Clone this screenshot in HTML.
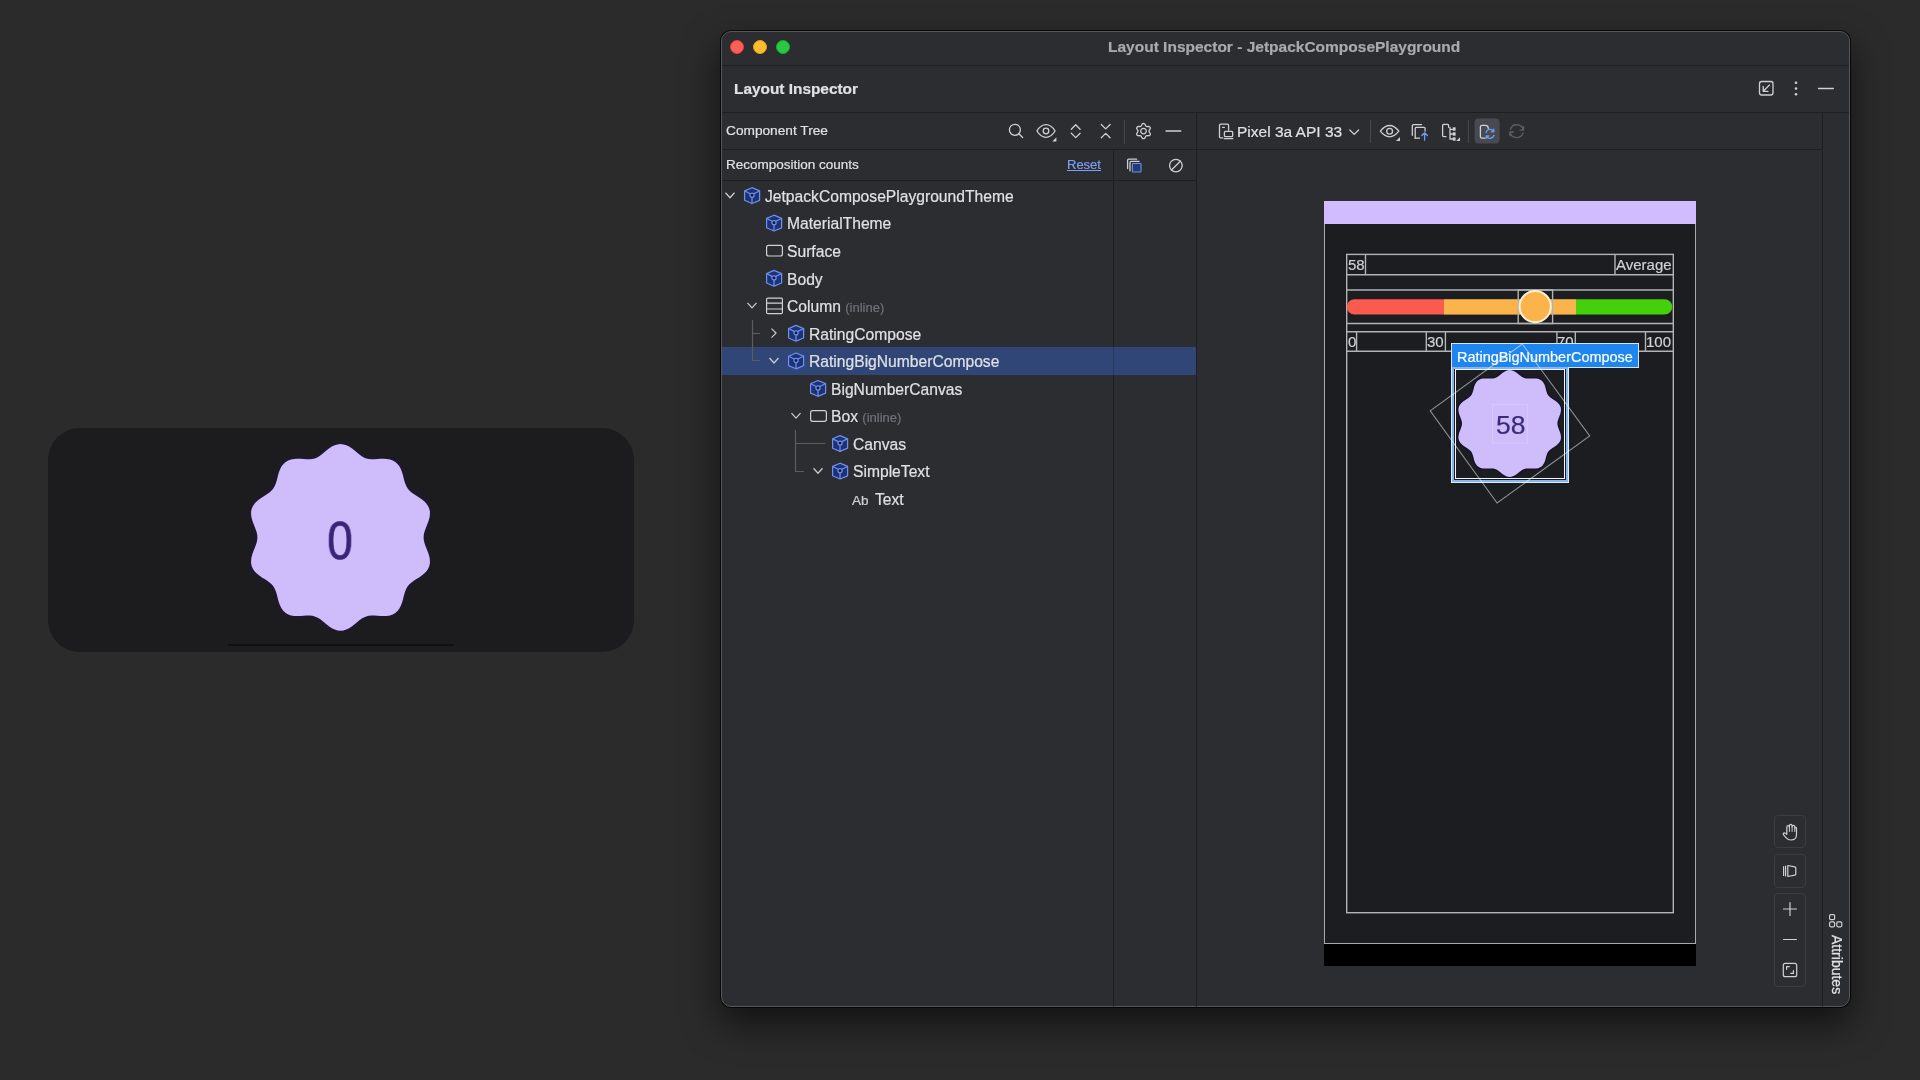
<!DOCTYPE html>
<html><head><meta charset="utf-8">
<style>
*{box-sizing:border-box}
html,body{margin:0;padding:0}
body{width:1920px;height:1080px;background:#2b2b2b;position:relative;overflow:hidden;font-family:"Liberation Sans",sans-serif;color:#dfe1e5}
.a{position:absolute}
.hl{position:absolute;height:1px;background:#1e1f22}
.vl{position:absolute;width:1px;background:#1e1f22}
.t{position:absolute;white-space:nowrap;line-height:1;will-change:transform;-webkit-text-stroke:0.2px currentColor}
svg{position:absolute;overflow:visible}
</style></head><body>

<!-- left card -->
<div class="a" style="left:48px;top:428px;width:586px;height:224px;border-radius:32px;background:#1c1c1e"></div>
<div class="a" style="left:228px;top:644px;width:226px;height:2px;background:#101011"></div>
<svg style="left:0;top:0" width="1920" height="1080"><path fill="none" stroke="#1f1830" stroke-width="4" d="M423.6 537.4L423.8 540.0L424.4 542.7L425.3 545.4L426.4 548.3L427.6 551.2L428.7 554.2L429.5 557.3L429.9 560.4L429.9 563.4L429.2 566.2L428.0 568.9L426.3 571.4L424.2 573.6L421.7 575.6L419.1 577.4L416.4 579.1L413.8 580.8L411.5 582.4L409.4 584.2L407.7 586.2L406.4 588.5L405.3 591.0L404.4 593.7L403.6 596.7L402.9 599.8L402.0 602.8L400.8 605.8L399.4 608.5L397.5 610.9L395.3 612.9L392.8 614.4L390.0 615.4L386.9 615.9L383.7 616.1L380.5 616.0L377.4 615.8L374.3 615.6L371.4 615.6L368.7 615.8L366.2 616.4L363.8 617.4L361.4 618.8L359.1 620.6L356.7 622.5L354.3 624.5L351.8 626.5L349.1 628.2L346.3 629.5L343.4 630.4L340.5 630.7L337.6 630.4L334.7 629.5L331.9 628.2L329.2 626.5L326.7 624.5L324.3 622.5L321.9 620.6L319.6 618.8L317.2 617.4L314.8 616.4L312.3 615.8L309.6 615.6L306.7 615.6L303.6 615.8L300.5 616.0L297.3 616.1L294.1 615.9L291.0 615.4L288.2 614.4L285.7 612.9L283.5 610.9L281.6 608.5L280.2 605.8L279.0 602.8L278.1 599.8L277.4 596.7L276.6 593.7L275.7 591.0L274.6 588.5L273.3 586.2L271.6 584.2L269.5 582.4L267.2 580.8L264.6 579.1L261.9 577.4L259.3 575.6L256.8 573.6L254.7 571.4L253.0 568.9L251.8 566.2L251.1 563.4L251.1 560.4L251.5 557.3L252.3 554.2L253.4 551.2L254.6 548.3L255.7 545.4L256.6 542.7L257.2 540.0L257.4 537.4L257.2 534.8L256.6 532.1L255.7 529.4L254.6 526.5L253.4 523.6L252.3 520.6L251.5 517.5L251.1 514.4L251.1 511.4L251.8 508.6L253.0 505.9L254.7 503.4L256.8 501.2L259.3 499.2L261.9 497.4L264.6 495.7L267.2 494.0L269.5 492.4L271.6 490.6L273.3 488.6L274.6 486.3L275.7 483.8L276.6 481.1L277.4 478.1L278.1 475.0L279.0 472.0L280.2 469.0L281.6 466.3L283.5 463.9L285.7 461.9L288.2 460.4L291.0 459.4L294.1 458.9L297.3 458.7L300.5 458.8L303.6 459.0L306.7 459.2L309.6 459.2L312.3 459.0L314.8 458.4L317.2 457.4L319.6 456.0L321.9 454.2L324.3 452.3L326.7 450.3L329.2 448.3L331.9 446.6L334.7 445.3L337.6 444.4L340.5 444.1L343.4 444.4L346.3 445.3L349.1 446.6L351.8 448.3L354.3 450.3L356.7 452.3L359.1 454.2L361.4 456.0L363.8 457.4L366.2 458.4L368.7 459.0L371.4 459.2L374.3 459.2L377.4 459.0L380.5 458.8L383.7 458.7L386.9 458.9L390.0 459.4L392.8 460.4L395.3 461.9L397.5 463.9L399.4 466.3L400.8 469.0L402.0 472.0L402.9 475.0L403.6 478.1L404.4 481.1L405.3 483.8L406.4 486.3L407.7 488.6L409.4 490.6L411.5 492.4L413.8 494.0L416.4 495.7L419.1 497.4L421.7 499.2L424.2 501.2L426.3 503.4L428.0 505.9L429.2 508.6L429.9 511.4L429.9 514.4L429.5 517.5L428.7 520.6L427.6 523.6L426.4 526.5L425.3 529.4L424.4 532.1L423.8 534.8Z"/><path id="fl1" fill="#cfbcfb" d="M423.6 537.4L423.8 540.0L424.4 542.7L425.3 545.4L426.4 548.3L427.6 551.2L428.7 554.2L429.5 557.3L429.9 560.4L429.9 563.4L429.2 566.2L428.0 568.9L426.3 571.4L424.2 573.6L421.7 575.6L419.1 577.4L416.4 579.1L413.8 580.8L411.5 582.4L409.4 584.2L407.7 586.2L406.4 588.5L405.3 591.0L404.4 593.7L403.6 596.7L402.9 599.8L402.0 602.8L400.8 605.8L399.4 608.5L397.5 610.9L395.3 612.9L392.8 614.4L390.0 615.4L386.9 615.9L383.7 616.1L380.5 616.0L377.4 615.8L374.3 615.6L371.4 615.6L368.7 615.8L366.2 616.4L363.8 617.4L361.4 618.8L359.1 620.6L356.7 622.5L354.3 624.5L351.8 626.5L349.1 628.2L346.3 629.5L343.4 630.4L340.5 630.7L337.6 630.4L334.7 629.5L331.9 628.2L329.2 626.5L326.7 624.5L324.3 622.5L321.9 620.6L319.6 618.8L317.2 617.4L314.8 616.4L312.3 615.8L309.6 615.6L306.7 615.6L303.6 615.8L300.5 616.0L297.3 616.1L294.1 615.9L291.0 615.4L288.2 614.4L285.7 612.9L283.5 610.9L281.6 608.5L280.2 605.8L279.0 602.8L278.1 599.8L277.4 596.7L276.6 593.7L275.7 591.0L274.6 588.5L273.3 586.2L271.6 584.2L269.5 582.4L267.2 580.8L264.6 579.1L261.9 577.4L259.3 575.6L256.8 573.6L254.7 571.4L253.0 568.9L251.8 566.2L251.1 563.4L251.1 560.4L251.5 557.3L252.3 554.2L253.4 551.2L254.6 548.3L255.7 545.4L256.6 542.7L257.2 540.0L257.4 537.4L257.2 534.8L256.6 532.1L255.7 529.4L254.6 526.5L253.4 523.6L252.3 520.6L251.5 517.5L251.1 514.4L251.1 511.4L251.8 508.6L253.0 505.9L254.7 503.4L256.8 501.2L259.3 499.2L261.9 497.4L264.6 495.7L267.2 494.0L269.5 492.4L271.6 490.6L273.3 488.6L274.6 486.3L275.7 483.8L276.6 481.1L277.4 478.1L278.1 475.0L279.0 472.0L280.2 469.0L281.6 466.3L283.5 463.9L285.7 461.9L288.2 460.4L291.0 459.4L294.1 458.9L297.3 458.7L300.5 458.8L303.6 459.0L306.7 459.2L309.6 459.2L312.3 459.0L314.8 458.4L317.2 457.4L319.6 456.0L321.9 454.2L324.3 452.3L326.7 450.3L329.2 448.3L331.9 446.6L334.7 445.3L337.6 444.4L340.5 444.1L343.4 444.4L346.3 445.3L349.1 446.6L351.8 448.3L354.3 450.3L356.7 452.3L359.1 454.2L361.4 456.0L363.8 457.4L366.2 458.4L368.7 459.0L371.4 459.2L374.3 459.2L377.4 459.0L380.5 458.8L383.7 458.7L386.9 458.9L390.0 459.4L392.8 460.4L395.3 461.9L397.5 463.9L399.4 466.3L400.8 469.0L402.0 472.0L402.9 475.0L403.6 478.1L404.4 481.1L405.3 483.8L406.4 486.3L407.7 488.6L409.4 490.6L411.5 492.4L413.8 494.0L416.4 495.7L419.1 497.4L421.7 499.2L424.2 501.2L426.3 503.4L428.0 505.9L429.2 508.6L429.9 511.4L429.9 514.4L429.5 517.5L428.7 520.6L427.6 523.6L426.4 526.5L425.3 529.4L424.4 532.1L423.8 534.8Z"/></svg>
<div class="t" style="left:312px;top:513.5px;width:56px;text-align:center;font-size:53px;color:#3a2477;transform:scaleX(0.87);-webkit-text-stroke:0.7px #3a2477">0</div>

<!-- window -->
<div class="a" style="left:721px;top:31px;width:1129px;height:976px;border-radius:10px;background:#2b2d30;border:1px solid #56575a;box-shadow:0 0 0 1px rgba(0,0,0,.75),0 16px 36px rgba(0,0,0,.6)"></div>


<!-- title bar -->
<div class="a" style="left:730px;top:40px;width:14px;height:14px;border-radius:50%;background:#fe5f57;border:0.5px solid #e0443e"></div>
<div class="a" style="left:753px;top:40px;width:14px;height:14px;border-radius:50%;background:#febc2e;border:0.5px solid #dea123"></div>
<div class="a" style="left:776px;top:40px;width:14px;height:14px;border-radius:50%;background:#28c840;border:0.5px solid #1aab29"></div>
<div class="t" style="left:1108px;top:39px;font-size:15.5px;font-weight:bold;color:#a9aaad">Layout Inspector - JetpackComposePlayground</div>
<div class="hl" style="left:722px;top:65px;width:1127px"></div>

<!-- tool window header -->
<div class="t" style="left:734px;top:81px;font-size:15.4px;font-weight:bold;color:#dfe1e5">Layout Inspector</div>
<div class="hl" style="left:722px;top:112px;width:1127px"></div>

<!-- component tree toolbar -->
<div class="t" style="left:726px;top:124px;font-size:13.7px;color:#dfe1e5">Component Tree</div>
<div class="hl" style="left:722px;top:149px;width:1100px"></div>
<div class="vl" style="left:1124px;top:120px;height:24px;background:#45474b"></div>

<!-- recomposition row -->
<div class="t" style="left:726px;top:158px;font-size:13.5px;color:#dfe1e5">Recomposition counts</div>
<div class="t" style="left:1067px;top:158px;font-size:13px;color:#7c9ff5;text-decoration:underline">Reset</div>
<div class="hl" style="left:722px;top:180px;width:474px"></div>

<!-- vertical separators -->
<div class="vl" style="left:1113px;top:150px;height:857px"></div>
<div class="vl" style="left:1196px;top:112px;height:895px"></div>
<div class="vl" style="left:1822px;top:112px;height:895px"></div>

<!-- selected row -->
<div class="a" style="left:722px;top:347px;width:474px;height:28px;background:#2f4677"></div>
<div class="vl" style="left:1113px;top:347px;height:28px;background:#283a5e"></div>


<!-- tree -->
<div class="t" style="left:765px;top:188.8px;font-size:15.65px">JetpackComposePlaygroundTheme</div>
<div class="t" style="left:787px;top:216.4px;font-size:15.65px">MaterialTheme</div>
<div class="t" style="left:787px;top:243.9px;font-size:15.65px">Surface</div>
<div class="t" style="left:787px;top:271.5px;font-size:15.65px">Body</div>
<div class="t" style="left:787px;top:299.0px;font-size:15.65px">Column <span style="font-size:13px;color:#6f737a">(inline)</span></div>
<div class="t" style="left:809px;top:326.6px;font-size:15.65px">RatingCompose</div>
<div class="t" style="left:809px;top:354.1px;font-size:15.65px">RatingBigNumberCompose</div>
<div class="t" style="left:831px;top:381.7px;font-size:15.65px">BigNumberCanvas</div>
<div class="t" style="left:831px;top:409.2px;font-size:15.65px">Box <span style="font-size:13px;color:#6f737a">(inline)</span></div>
<div class="t" style="left:853px;top:436.8px;font-size:15.65px">Canvas</div>
<div class="t" style="left:853px;top:464.3px;font-size:15.65px">SimpleText</div>
<div class="t" style="left:852.4px;top:493.8px;font-size:13.5px;color:#cfd1d4">Ab</div>
<div class="t" style="left:874.6px;top:491.9px;font-size:15.65px">Text</div>
<svg style="left:0;top:0" width="1920" height="1080"><defs><g id="cube"><path d="M8 0.6L15.6 3.8V13.2L8 16.4L0.6 13.2V3.8Z" fill="#1e3270" stroke="#6d8ff2" stroke-width="1.25" stroke-linejoin="round"/><path d="M0.8 3.9L6.2 6.6M15.4 3.9L9.8 6.6M8 10.2V16.2" stroke="#6d8ff2" stroke-width="1.25"/><circle cx="8" cy="8.1" r="2.1" fill="#101a3c" stroke="#6d8ff2" stroke-width="1.25"/></g></defs>
<use href="#cube" x="744" y="187.1"/>
<path d="M725.5 192.7L730 197.7L734.5 192.7" fill="none" stroke="#c9cbcf" stroke-width="1.3"/>
<use href="#cube" x="766" y="214.6"/>
<rect x="766.6" y="245.4" width="15.8" height="10.6" rx="2" fill="none" stroke="#cfd1d4" stroke-width="1.2"/>
<use href="#cube" x="766" y="269.8"/>
<g fill="none" stroke="#cfd1d4" stroke-width="1.2"><rect x="766.6" y="298.1" width="15.8" height="15.6" rx="1.2"/><path d="M766.6 303.1H782.4M766.6 309.0H782.4"/></g>
<path d="M747.5 302.9L752 307.9L756.5 302.9" fill="none" stroke="#c9cbcf" stroke-width="1.3"/>
<use href="#cube" x="788" y="324.8"/>
<path d="M771.5 328.6L776 333.1L771.5 337.6" fill="none" stroke="#c9cbcf" stroke-width="1.3"/>
<use href="#cube" x="788" y="352.4"/>
<path d="M769.5 358.0L774 363.0L778.5 358.0" fill="none" stroke="#c9cbcf" stroke-width="1.3"/>
<use href="#cube" x="810" y="379.9"/>
<rect x="810.6" y="410.7" width="15.8" height="10.6" rx="2" fill="none" stroke="#cfd1d4" stroke-width="1.2"/>
<path d="M791.5 413.1L796 418.1L800.5 413.1" fill="none" stroke="#c9cbcf" stroke-width="1.3"/>
<use href="#cube" x="832" y="435.0"/>
<use href="#cube" x="832" y="462.6"/>
<path d="M813.5 468.2L818 473.2L822.5 468.2" fill="none" stroke="#c9cbcf" stroke-width="1.3"/>
<path d="M752.5 320V360.5H760M752.5 333.5H760M795.5 430V471.5H804M795.5 443.5H825.5" fill="none" stroke="#5b5d62" stroke-width="1.2"/>
</svg>

<!-- toolbar icons -->
<svg style="left:0;top:0" width="1920" height="1080" fill="none" stroke="#cdd0d4" stroke-width="1.3" stroke-linecap="round" stroke-linejoin="round">
<!-- header right -->
<rect x="1759.5" y="81.5" width="13.5" height="13.5" rx="2.2"/>
<path d="M1769.5 85L1763.2 91.3M1763.2 86.5V91.3H1768"/>
<circle cx="1796" cy="82.8" r="1.3" fill="#cdd0d4" stroke="none"/><circle cx="1796" cy="88.5" r="1.3" fill="#cdd0d4" stroke="none"/><circle cx="1796" cy="94.2" r="1.3" fill="#cdd0d4" stroke="none"/>
<path d="M1818.5 88.5H1833.3"/>
<!-- component tree toolbar -->
<circle cx="1014.9" cy="129.8" r="5.5"/><path d="M1018.9 133.8L1022.6 137.5"/>
<path d="M1036.9 131C1039.8 126.4 1042.8 124.7 1046 124.7C1049.2 124.7 1052.2 126.4 1055.1 131C1052.2 135.6 1049.2 137.3 1046 137.3C1042.8 137.3 1039.8 135.6 1036.9 131Z"/><circle cx="1046" cy="131" r="2.8"/>
<path d="M1052.3 141.4L1056.4 137.3V141.4Z" fill="#cdd0d4" stroke="none"/>
<path d="M1071.3 129.2L1075.7 124.8L1080.1 129.2M1071.3 133.2L1075.7 137.6L1080.1 133.2"/>
<path d="M1101.3 124.5L1105.7 128.9L1110.1 124.5M1101.3 137.8L1105.7 133.4L1110.1 137.8"/>
<g transform="translate(1143.5 131.1)"><path d="M0.00 -7.60L0.65 -7.49L1.25 -7.08L1.70 -6.33L2.02 -5.56L2.36 -5.06L2.75 -4.76L3.20 -4.58L3.80 -4.53L4.63 -4.63L5.51 -4.62L6.16 -4.31L6.58 -3.80L6.81 -3.18L6.75 -2.46L6.33 -1.70L5.82 -1.03L5.56 -0.49L5.50 -0.00L5.56 0.49L5.82 1.03L6.33 1.70L6.75 2.46L6.81 3.18L6.58 3.80L6.16 4.31L5.51 4.62L4.63 4.63L3.80 4.53L3.20 4.58L2.75 4.76L2.36 5.06L2.02 5.56L1.70 6.33L1.25 7.08L0.65 7.49L0.00 7.60L-0.65 7.49L-1.25 7.08L-1.70 6.33L-2.02 5.56L-2.36 5.06L-2.75 4.76L-3.20 4.58L-3.80 4.53L-4.63 4.63L-5.51 4.62L-6.16 4.31L-6.58 3.80L-6.81 3.18L-6.75 2.46L-6.33 1.70L-5.82 1.03L-5.56 0.49L-5.50 0.00L-5.56 -0.49L-5.82 -1.03L-6.33 -1.70L-6.75 -2.46L-6.81 -3.18L-6.58 -3.80L-6.16 -4.31L-5.51 -4.62L-4.63 -4.63L-3.80 -4.53L-3.20 -4.58L-2.75 -4.76L-2.36 -5.06L-2.02 -5.56L-1.70 -6.33L-1.25 -7.08L-0.65 -7.49Z"/><circle cx="0" cy="0" r="2.8"/></g>
<path d="M1166 131H1180.8"/>
<!-- recomposition row icons -->
<path d="M1127.6 168.5V160.3Q1127.6 159.2 1128.7 159.2H1136.6M1130 170.8V162.5Q1130 161.4 1131.1 161.4H1139"/>
<rect x="1132.4" y="163.5" width="8.6" height="8.5" rx="0.8" fill="#1f3b78" stroke="#6f93e6" stroke-width="1.1"/>
<circle cx="1175.9" cy="165.6" r="6.3"/><path d="M1180.3 161.2L1171.5 170"/>
<!-- device toolbar -->
<path d="M1222.8 137.8H1220.6Q1219.5 137.8 1219.5 136.7V125.3Q1219.5 124.2 1220.6 124.2H1227.5Q1228.6 124.2 1228.6 125.3V130.2M1222.7 127.4H1224.3"/>
<rect x="1224.4" y="131.4" width="8.3" height="5.3" rx="1"/><path d="M1224.3 138.7H1232.8"/>
<path d="M1349.8 130L1354.2 134.4L1358.6 130"/>
<path d="M1380.3 131.2Q1389.6 119.8 1398.9 131.2Q1389.6 142.6 1380.3 131.2Z"/><circle cx="1389.6" cy="131.2" r="2.9"/>
<path d="M1396 141L1400 137V141Z" fill="#cdd0d4" stroke="none"/>
<path d="M1412.3 135.3V125.7Q1412.3 124.6 1413.4 124.6H1421.6M1415.2 138.2V128.4Q1415.2 127.3 1416.3 127.3H1424Q1425.1 127.3 1425.1 128.4V131"/><path d="M1415.2 138.2H1419.5"/>
<path d="M1424.6 140.2V132.8M1421.8 135.5L1424.6 132.7L1427.4 135.5" stroke="#6d9cf5"/>
<path d="M1447.5 124.3H1443.7Q1442.6 124.3 1442.6 125.4V135.5Q1442.6 136.6 1443.7 136.6H1446M1447.5 124.3Q1448.6 124.3 1448.6 125.4V127.3"/>
<path d="M1450 127.3V139M1450 129.3H1452.6M1450 134H1452.6M1450 139H1452.6"/>
<rect x="1452.8" y="127.3" width="2.8" height="3.4" fill="#cdd0d4" stroke="none"/><rect x="1452.8" y="132.3" width="2.8" height="3.4" fill="#cdd0d4" stroke="none"/><rect x="1452.8" y="137.3" width="2.8" height="3.4" fill="#cdd0d4" stroke="none"/>
<path d="M1456.2 141L1460 137.2V141Z" fill="#cdd0d4" stroke="none"/>
<rect x="1474.6" y="118.5" width="25" height="25" rx="4" fill="#484a51" stroke="none"/>
<path d="M1485.5 125.3H1482Q1480.4 125.3 1480.4 127V136.4Q1480.4 138.1 1482 138.1H1485M1485.5 125.3Q1488.3 125.3 1488.3 128.5"/>
<path d="M1486 132.5A4.2 4.2 0 0 1 1493.6 131.4M1494 135.3A4.2 4.2 0 0 1 1486.4 136.4M1493.8 129.2V131.8H1491.2M1486.2 138.6V136H1488.8" stroke="#6d9cf5"/>
<path d="M1510.3 129.5A6.8 6.8 0 0 1 1523.4 130M1523.2 132.8A6.8 6.8 0 0 1 1510.1 132.3M1523.6 126.6V130.2H1520M1509.9 135.6V132H1513.5" stroke="#5d5f64"/>
</svg>
<div class="t" style="left:1236.8px;top:123.8px;font-size:15.5px;color:#dfe1e5">Pixel 3a API 33</div>
<div class="vl" style="left:1370px;top:120px;height:23px;background:#45474b"></div>
<div class="vl" style="left:1468px;top:120px;height:23px;background:#45474b"></div>

<!-- device render -->
<div class="a" style="left:1324px;top:201px;width:372px;height:23px;background:#d0bcfe"></div>
<div class="a" style="left:1324px;top:224px;width:372px;height:720px;background:#1b1d21;border:1.5px solid #a9a9ab;border-top:none"></div>
<div class="a" style="left:1324px;top:943.5px;width:372px;height:22px;background:#000"></div>
<svg style="left:0;top:0" width="1920" height="1080">
<g fill="none" stroke="#b3b3b5" stroke-width="1.4">
<rect x="1346.7" y="254.4" width="326.6" height="658.3"/>
<path d="M1346.7 274.7H1673.3M1346.7 290H1673.3M1346.7 323.5H1673.3M1346.7 331.7H1673.3M1346.7 351.3H1673.3"/>
<path d="M1365.5 254.4V274.7M1615 254.4V274.7"/>
<path d="M1356.6 331.7V351.3M1426.3 331.7V351.3M1445.4 331.7V351.3M1556.9 331.7V351.3M1575.3 331.7V351.3M1645.5 331.7V351.3"/>
</g>
<path d="M1354.5 299.2H1444V314.6H1354.5A7.7 7.7 0 0 1 1354.5 299.2Z" fill="#fb5b4f"/>
<rect x="1444" y="299.2" width="132" height="15.4" fill="#fbb44c"/>
<path d="M1576 299.2H1664.6A7.7 7.7 0 0 1 1664.6 314.6H1576Z" fill="#44d10c"/>
<rect x="1518.2" y="290" width="34.4" height="33.5" fill="none" stroke="#b3b3b5" stroke-width="1.4"/>
<circle cx="1535.2" cy="306.6" r="15.6" fill="#fbb44c" stroke="#fff1d8" stroke-width="2"/>
<path fill="none" stroke="#17132a" stroke-width="3" d="M1557.4 423.5L1557.5 425.0L1557.9 426.5L1558.4 428.1L1559.0 429.7L1559.7 431.4L1560.3 433.1L1560.7 434.9L1561.0 436.7L1560.9 438.4L1560.6 440.0L1559.9 441.6L1558.9 443.0L1557.7 444.3L1556.3 445.4L1554.8 446.5L1553.3 447.4L1551.8 448.4L1550.4 449.4L1549.3 450.4L1548.3 451.5L1547.5 452.8L1546.9 454.3L1546.4 455.8L1545.9 457.5L1545.5 459.3L1545.0 461.0L1544.3 462.7L1543.4 464.3L1542.4 465.7L1541.1 466.8L1539.7 467.6L1538.1 468.2L1536.3 468.5L1534.5 468.6L1532.7 468.6L1530.9 468.5L1529.1 468.4L1527.5 468.4L1525.9 468.5L1524.4 468.9L1523.0 469.4L1521.7 470.2L1520.4 471.2L1519.0 472.3L1517.6 473.5L1516.2 474.6L1514.6 475.6L1513.0 476.3L1511.4 476.8L1509.7 477.0L1508.0 476.8L1506.4 476.3L1504.8 475.6L1503.2 474.6L1501.8 473.5L1500.4 472.3L1499.0 471.2L1497.7 470.2L1496.4 469.4L1495.0 468.9L1493.5 468.5L1491.9 468.4L1490.3 468.4L1488.5 468.5L1486.7 468.6L1484.9 468.6L1483.1 468.5L1481.3 468.2L1479.7 467.6L1478.3 466.8L1477.0 465.7L1476.0 464.3L1475.1 462.7L1474.4 461.0L1473.9 459.3L1473.5 457.5L1473.0 455.8L1472.5 454.3L1471.9 452.8L1471.1 451.5L1470.1 450.4L1469.0 449.4L1467.6 448.4L1466.1 447.4L1464.6 446.5L1463.1 445.4L1461.7 444.3L1460.5 443.0L1459.5 441.6L1458.8 440.0L1458.5 438.4L1458.4 436.7L1458.7 434.9L1459.1 433.1L1459.7 431.4L1460.4 429.7L1461.0 428.1L1461.5 426.5L1461.9 425.0L1462.0 423.5L1461.9 422.0L1461.5 420.5L1461.0 418.9L1460.4 417.3L1459.7 415.6L1459.1 413.9L1458.7 412.1L1458.4 410.3L1458.5 408.6L1458.8 407.0L1459.5 405.4L1460.5 404.0L1461.7 402.7L1463.1 401.6L1464.6 400.5L1466.1 399.6L1467.6 398.6L1469.0 397.6L1470.1 396.6L1471.1 395.5L1471.9 394.2L1472.5 392.7L1473.0 391.2L1473.5 389.5L1473.9 387.7L1474.4 386.0L1475.1 384.3L1476.0 382.7L1477.0 381.3L1478.3 380.2L1479.7 379.4L1481.3 378.8L1483.1 378.5L1484.9 378.4L1486.7 378.4L1488.5 378.5L1490.3 378.6L1491.9 378.6L1493.5 378.5L1495.0 378.1L1496.4 377.6L1497.7 376.8L1499.0 375.8L1500.4 374.7L1501.8 373.5L1503.2 372.4L1504.8 371.4L1506.4 370.7L1508.0 370.2L1509.7 370.0L1511.4 370.2L1513.0 370.7L1514.6 371.4L1516.2 372.4L1517.6 373.5L1519.0 374.7L1520.4 375.8L1521.7 376.8L1523.0 377.6L1524.4 378.1L1525.9 378.5L1527.5 378.6L1529.1 378.6L1530.9 378.5L1532.7 378.4L1534.5 378.4L1536.3 378.5L1538.1 378.8L1539.7 379.4L1541.1 380.2L1542.4 381.3L1543.4 382.7L1544.3 384.3L1545.0 386.0L1545.5 387.7L1545.9 389.5L1546.4 391.2L1546.9 392.7L1547.5 394.2L1548.3 395.5L1549.3 396.6L1550.4 397.6L1551.8 398.6L1553.3 399.6L1554.8 400.5L1556.3 401.6L1557.7 402.7L1558.9 404.0L1559.9 405.4L1560.6 407.0L1560.9 408.6L1561.0 410.3L1560.7 412.1L1560.3 413.9L1559.7 415.6L1559.0 417.3L1558.4 418.9L1557.9 420.5L1557.5 422.0Z"/><path id="fl2" fill="#cfbcfb" d="M1557.4 423.5L1557.5 425.0L1557.9 426.5L1558.4 428.1L1559.0 429.7L1559.7 431.4L1560.3 433.1L1560.7 434.9L1561.0 436.7L1560.9 438.4L1560.6 440.0L1559.9 441.6L1558.9 443.0L1557.7 444.3L1556.3 445.4L1554.8 446.5L1553.3 447.4L1551.8 448.4L1550.4 449.4L1549.3 450.4L1548.3 451.5L1547.5 452.8L1546.9 454.3L1546.4 455.8L1545.9 457.5L1545.5 459.3L1545.0 461.0L1544.3 462.7L1543.4 464.3L1542.4 465.7L1541.1 466.8L1539.7 467.6L1538.1 468.2L1536.3 468.5L1534.5 468.6L1532.7 468.6L1530.9 468.5L1529.1 468.4L1527.5 468.4L1525.9 468.5L1524.4 468.9L1523.0 469.4L1521.7 470.2L1520.4 471.2L1519.0 472.3L1517.6 473.5L1516.2 474.6L1514.6 475.6L1513.0 476.3L1511.4 476.8L1509.7 477.0L1508.0 476.8L1506.4 476.3L1504.8 475.6L1503.2 474.6L1501.8 473.5L1500.4 472.3L1499.0 471.2L1497.7 470.2L1496.4 469.4L1495.0 468.9L1493.5 468.5L1491.9 468.4L1490.3 468.4L1488.5 468.5L1486.7 468.6L1484.9 468.6L1483.1 468.5L1481.3 468.2L1479.7 467.6L1478.3 466.8L1477.0 465.7L1476.0 464.3L1475.1 462.7L1474.4 461.0L1473.9 459.3L1473.5 457.5L1473.0 455.8L1472.5 454.3L1471.9 452.8L1471.1 451.5L1470.1 450.4L1469.0 449.4L1467.6 448.4L1466.1 447.4L1464.6 446.5L1463.1 445.4L1461.7 444.3L1460.5 443.0L1459.5 441.6L1458.8 440.0L1458.5 438.4L1458.4 436.7L1458.7 434.9L1459.1 433.1L1459.7 431.4L1460.4 429.7L1461.0 428.1L1461.5 426.5L1461.9 425.0L1462.0 423.5L1461.9 422.0L1461.5 420.5L1461.0 418.9L1460.4 417.3L1459.7 415.6L1459.1 413.9L1458.7 412.1L1458.4 410.3L1458.5 408.6L1458.8 407.0L1459.5 405.4L1460.5 404.0L1461.7 402.7L1463.1 401.6L1464.6 400.5L1466.1 399.6L1467.6 398.6L1469.0 397.6L1470.1 396.6L1471.1 395.5L1471.9 394.2L1472.5 392.7L1473.0 391.2L1473.5 389.5L1473.9 387.7L1474.4 386.0L1475.1 384.3L1476.0 382.7L1477.0 381.3L1478.3 380.2L1479.7 379.4L1481.3 378.8L1483.1 378.5L1484.9 378.4L1486.7 378.4L1488.5 378.5L1490.3 378.6L1491.9 378.6L1493.5 378.5L1495.0 378.1L1496.4 377.6L1497.7 376.8L1499.0 375.8L1500.4 374.7L1501.8 373.5L1503.2 372.4L1504.8 371.4L1506.4 370.7L1508.0 370.2L1509.7 370.0L1511.4 370.2L1513.0 370.7L1514.6 371.4L1516.2 372.4L1517.6 373.5L1519.0 374.7L1520.4 375.8L1521.7 376.8L1523.0 377.6L1524.4 378.1L1525.9 378.5L1527.5 378.6L1529.1 378.6L1530.9 378.5L1532.7 378.4L1534.5 378.4L1536.3 378.5L1538.1 378.8L1539.7 379.4L1541.1 380.2L1542.4 381.3L1543.4 382.7L1544.3 384.3L1545.0 386.0L1545.5 387.7L1545.9 389.5L1546.4 391.2L1546.9 392.7L1547.5 394.2L1548.3 395.5L1549.3 396.6L1550.4 397.6L1551.8 398.6L1553.3 399.6L1554.8 400.5L1556.3 401.6L1557.7 402.7L1558.9 404.0L1559.9 405.4L1560.6 407.0L1560.9 408.6L1561.0 410.3L1560.7 412.1L1560.3 413.9L1559.7 415.6L1559.0 417.3L1558.4 418.9L1557.9 420.5L1557.5 422.0Z"/>
<rect x="1492.5" y="404.5" width="35" height="38.5" fill="none" stroke="#d6c6fc" stroke-width="1"/>
</svg>
<div class="t" style="left:1348px;top:256.5px;font-size:15px;color:#d2d2d4">58</div>
<div class="t" style="left:1616px;top:256.5px;font-size:15px;color:#d2d2d4">Average</div>
<div class="t" style="left:1348px;top:334px;font-size:15px;color:#d2d2d4">0</div>
<div class="t" style="left:1427px;top:334px;font-size:15px;color:#d2d2d4">30</div>
<div class="t" style="left:1557px;top:334px;font-size:15px;color:#d2d2d4">70</div>
<div class="t" style="left:1646px;top:334px;font-size:15px;color:#d2d2d4">100</div>
<div class="t" style="left:1495.5px;top:411.5px;font-size:26.5px;color:#3b2a7a">58</div>
<!-- selection -->
<div class="a" style="left:1451.2px;top:343.2px;width:188.3px;height:25px;background:#1f86ef;border:1px solid #cfe6ff"></div>
<div class="t" style="left:1457px;top:350.2px;font-size:14.45px;color:#fff;-webkit-text-stroke:0.2px #fff">RatingBigNumberCompose</div>
<div class="a" style="left:1451.2px;top:366.5px;width:118px;height:116.4px;border:3.5px solid #86b6ea;border-top-width:2px"></div>
<div class="a" style="left:1451.2px;top:366.5px;width:118px;height:116.4px;border:1px solid #d6ecff;border-top:none"></div>
<div class="a" style="left:1454.7px;top:368.5px;width:110.5px;height:110.5px;border:1.2px solid #f0f6ff"></div>
<svg style="left:0;top:0" width="1920" height="1080"><path d="M1522.3 344L1589.7 436L1497.1 503L1430.2 410.8Z" fill="none" stroke="rgba(255,255,255,0.5)" stroke-width="1.1"/></svg>

<!-- floating zoom toolbar -->
<div class="a" style="left:1774px;top:814.5px;width:32px;height:33.5px;border-radius:4px;border:1px solid #3b3d42;background:#2b2d30"></div>
<div class="a" style="left:1774px;top:854px;width:32px;height:33.5px;border-radius:4px;border:1px solid #3b3d42;background:#2b2d30"></div>
<div class="a" style="left:1774px;top:893.3px;width:32px;height:93.4px;border-radius:4px;border:1px solid #3b3d42;background:#2b2d30"></div>
<svg style="left:0;top:0" width="1920" height="1080" fill="none" stroke="#cdd0d4" stroke-width="1.2" stroke-linecap="round" stroke-linejoin="round">
<path d="M1783.8 835.2Q1783 834.3 1783.3 833.6Q1784.2 832.2 1785.6 833.4L1786.8 834.4V827.2Q1786.8 825.6 1788.1 825.6Q1789.4 825.6 1789.4 827.2V826Q1789.4 824.4 1790.75 824.4Q1792.1 824.4 1792.1 826V827Q1792.1 825.4 1793.45 825.4Q1794.8 825.4 1794.8 827V828.4Q1794.8 827 1795.65 827Q1796.5 827 1796.5 828.4V834.5Q1796.5 840 1791 840Q1788 840 1786 837.6Z"/><path d="M1789.4 827.2V831.5M1792.1 827V831.5M1794.8 828.4V831.5" stroke-width="1"/>
<path d="M1783.6 866.5V875.5M1785.6 866V876M1787.8 865.5L1794.8 866.8Q1795.8 867 1795.8 868V874Q1795.8 875 1794.8 875.2L1787.8 876.5Z"/>
<path d="M1790 902.5V915.5M1783.5 909H1796.5"/>
<path d="M1783.5 939.5H1796.5"/>
<rect x="1783.3" y="963.3" width="13.4" height="13.4" rx="2"/><path d="M1786.6 969.3V966.6H1789.3M1793.4 970.7V973.4H1790.7"/>
<!-- attributes icon -->
<rect x="1829.6" y="914.6" width="5" height="5" rx="1.2"/><rect x="1829.6" y="921.8" width="5" height="5" rx="1.2"/><rect x="1836.8" y="921.8" width="5" height="5" rx="1.2"/>
</svg>
<div class="t" style="left:1844.3px;top:934.5px;font-size:14px;color:#dfe1e5;transform-origin:0 0;transform:rotate(90deg);-webkit-text-stroke:0.25px #dfe1e5">Attributes</div>
</body></html>
